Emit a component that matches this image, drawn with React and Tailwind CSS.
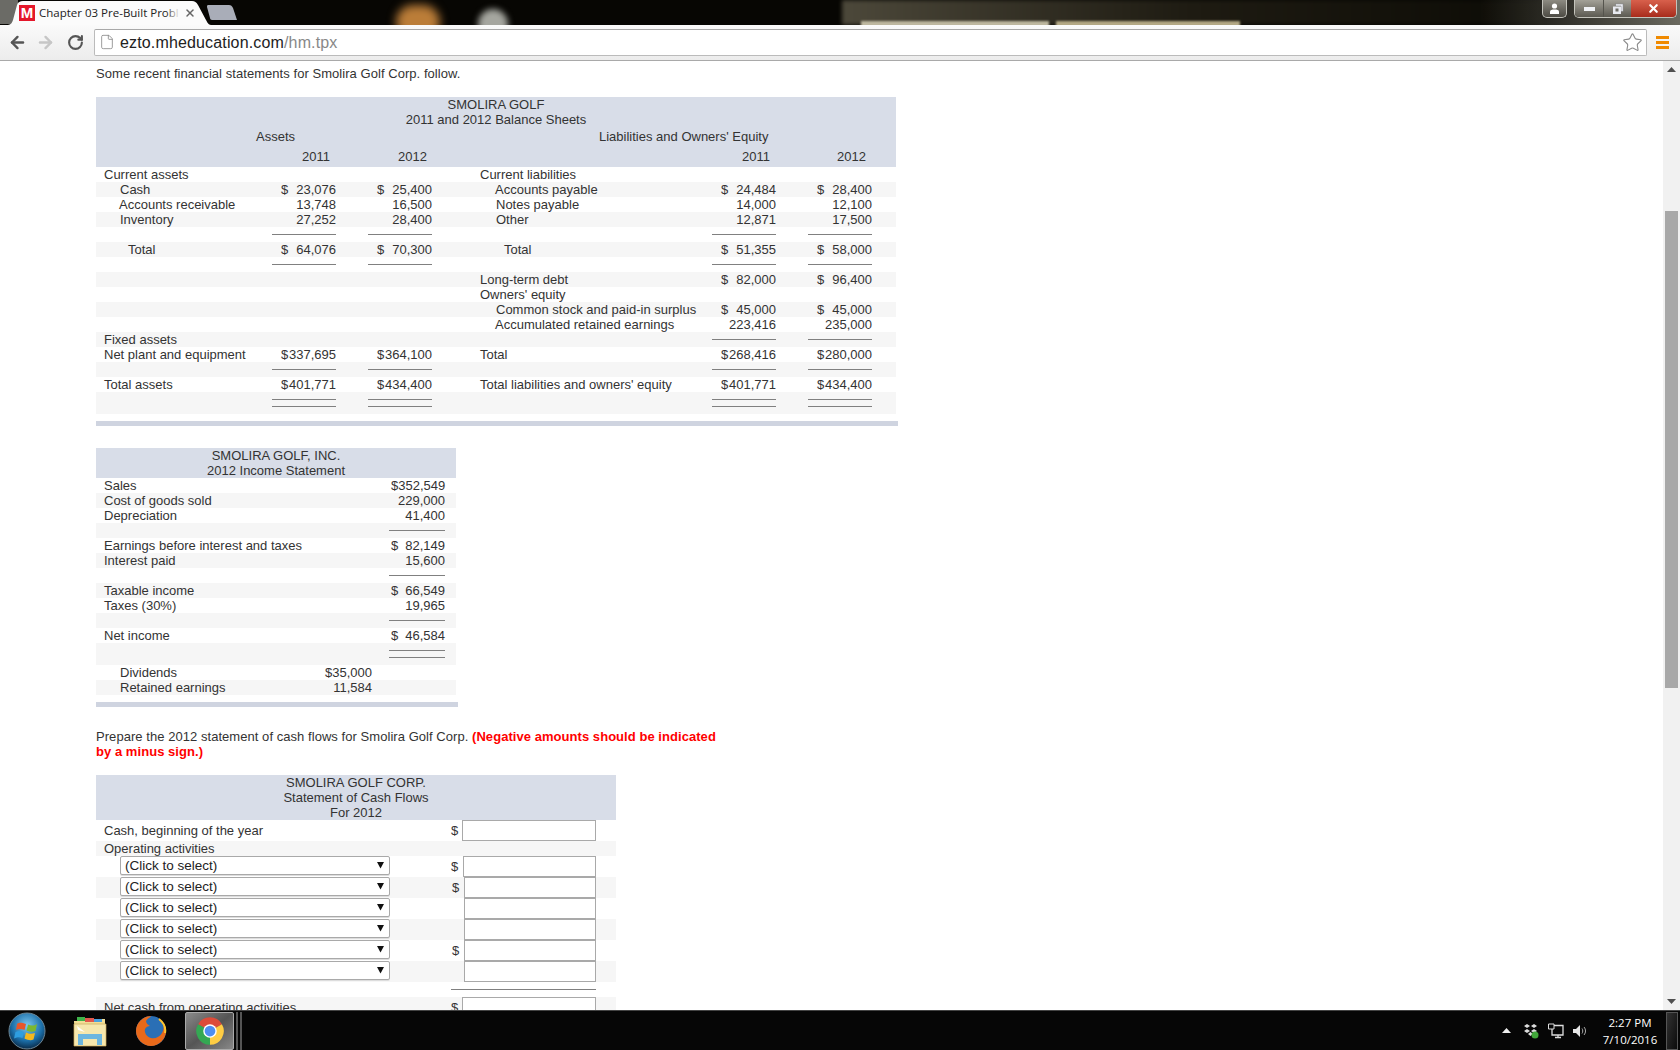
import React from 'react';
import { ArrowLeft, ArrowRight, RotateCw, File, Star, X } from 'lucide-react';

const balanceRows = [
  { left: 'Current assets', right: 'Current liabilities' },
  { gray: true, left: 'Cash', li: 'pl-[24px]', a: '23,076', b: '25,400', right: 'Accounts payable', ri: 'pl-[15px]', c: '24,484', d: '28,400', sign: true },
  { left: 'Accounts receivable', li: 'pl-[23px]', a: '13,748', b: '16,500', right: 'Notes payable', ri: 'pl-[16px]', c: '14,000', d: '12,100' },
  { gray: true, left: 'Inventory', li: 'pl-[24px]', a: '27,252', b: '28,400', right: 'Other', ri: 'pl-[16px]', c: '12,871', d: '17,500' },
  { ruleL: true, ruleR: true },
  { gray: true, left: 'Total', li: 'pl-[32px]', a: '64,076', b: '70,300', right: 'Total', ri: 'pl-[24px]', c: '51,355', d: '58,000', sign: true },
  { ruleL: true, ruleR: true },
  { gray: true, right: 'Long-term debt', c: '82,000', d: '96,400', signR: true },
  { right: "Owners' equity" },
  { gray: true, right: 'Common stock and paid-in surplus', ri: 'pl-[16px]', c: '45,000', d: '45,000', signR: true },
  { right: 'Accumulated retained earnings', ri: 'pl-[15px]', c: '223,416', d: '235,000' },
  { gray: true, left: 'Fixed assets', ruleR: true },
  { left: 'Net plant and equipment', a: '337,695', b: '364,100', right: 'Total', c: '268,416', d: '280,000', sign: true },
  { gray: true, ruleL: true, ruleR: true },
  { left: 'Total assets', a: '401,771', b: '434,400', right: "Total liabilities and owners' equity", c: '401,771', d: '434,400', sign: true },
];

const incomeRows = [
  { label: 'Sales', value: '352,549', sign: true },
  { gray: true, label: 'Cost of goods sold', value: '229,000' },
  { label: 'Depreciation', value: '41,400' },
  { gray: true, rule: true },
  { label: 'Earnings before interest and taxes', value: '82,149', sign: true },
  { gray: true, label: 'Interest paid', value: '15,600' },
  { rule: true },
  { gray: true, label: 'Taxable income', value: '66,549', sign: true },
  { label: 'Taxes (30%)', value: '19,965' },
  { gray: true, rule: true },
  { label: 'Net income', value: '46,584', sign: true },
];

const selectRows = [
  { sign: true, first: true },
  { gray: true, sign: true },
  {},
  { gray: true },
  { sign: true },
  { gray: true },
];

const Rule = () => (
  <div className="flex h-[15px] items-center">
    <div className="h-px w-full bg-[#808080]" />
  </div>
);

const DoubleRule = () => (
  <div className="flex flex-col gap-[6px] pt-[7px]">
    <div className="h-px w-full bg-[#808080]" />
    <div className="h-px w-full bg-[#808080]" />
  </div>
);

const Amount = ({ value, sign }) => (
  <div className="flex justify-between pl-[9px]">
    <span>{sign ? '$' : ''}</span>
    <span>{value}</span>
  </div>
);

const BalanceSheet = () => (
  <div className="w-[802px]">
    <div className="w-[800px] bg-[#d8dde8]">
      <div className="text-center">SMOLIRA GOLF</div>
      <div className="text-center">2011 and 2012 Balance Sheets</div>
      <div className="flex h-[19px] items-center">
        <div className="w-[384px] pl-[160px]">Assets</div>
        <div className="pl-[119px]">Liabilities and Owners' Equity</div>
      </div>
      <div className="grid h-[21px] grid-cols-[176px_64px_32px_64px_48px_232px_64px_32px_64px_24px] items-center">
        <div />
        <div className="pr-[6px] text-right">2011</div>
        <div />
        <div className="pr-[5px] text-right">2012</div>
        <div />
        <div />
        <div className="pr-[6px] text-right">2011</div>
        <div />
        <div className="pr-[6px] text-right">2012</div>
        <div />
      </div>
    </div>
    {balanceRows.map((row, i) => (
      <div
        key={i}
        className={`grid h-[15px] w-[800px] grid-cols-[176px_64px_32px_64px_48px_232px_64px_32px_64px_24px] ${row.gray ? 'bg-[#f6f6f6]' : ''}`}
      >
        <div className={`whitespace-nowrap pl-[8px] ${row.li || ''}`}>{row.left}</div>
        <div>{row.ruleL ? <Rule /> : row.a && <Amount value={row.a} sign={row.sign} />}</div>
        <div />
        <div>{row.ruleL ? <Rule /> : row.b && <Amount value={row.b} sign={row.sign} />}</div>
        <div />
        <div className={`whitespace-nowrap ${row.ri || ''}`}>{row.right}</div>
        <div>{row.ruleR ? <Rule /> : row.c && <Amount value={row.c} sign={row.sign || row.signR} />}</div>
        <div />
        <div>{row.ruleR ? <Rule /> : row.d && <Amount value={row.d} sign={row.sign || row.signR} />}</div>
        <div />
      </div>
    ))}
    <div className="grid h-[22px] w-[800px] grid-cols-[176px_64px_32px_64px_48px_232px_64px_32px_64px_24px] bg-[#f6f6f6]">
      <div />
      <DoubleRule />
      <div />
      <DoubleRule />
      <div />
      <div />
      <DoubleRule />
      <div />
      <DoubleRule />
      <div />
    </div>
    <div className="mt-[7px] h-[5px] bg-[#cfd4e0]" />
  </div>
);

const IncomeStatement = () => (
  <div className="mt-[22px] w-[362px]">
    <div className="w-[360px] bg-[#d8dde8] text-center">
      <div>SMOLIRA GOLF, INC.</div>
      <div>2012 Income Statement</div>
    </div>
    {incomeRows.map((row, i) => (
      <div key={i} className={`flex h-[15px] w-[360px] ${row.gray ? 'bg-[#f6f6f6]' : ''}`}>
        <div className="w-[293px] pl-[8px]">{row.label}</div>
        <div className="w-[56px]">
          {row.rule ? <Rule /> : (
            <div className="flex justify-between pl-[2px]">
              <span>{row.sign ? '$' : ''}</span>
              <span>{row.value}</span>
            </div>
          )}
        </div>
      </div>
    ))}
    <div className="flex h-[22px] w-[360px] bg-[#f6f6f6]">
      <div className="w-[293px]" />
      <div className="w-[56px]"><DoubleRule /></div>
    </div>
    <div className="flex h-[15px] w-[360px]">
      <div className="w-[276px] pl-[24px]">Dividends</div>
      <div className="-ml-[60px] w-[60px] text-right">$35,000</div>
    </div>
    <div className="flex h-[15px] w-[360px] bg-[#f6f6f6]">
      <div className="w-[276px] pl-[24px]">Retained earnings</div>
      <div className="-ml-[60px] w-[60px] text-right">11,584</div>
    </div>
    <div className="mt-[7px] h-[5px] bg-[#cfd4e0]" />
  </div>
);

const CashInput = ({ className }) => (
  <input className={`h-[21px] border border-[#a9a9a9] bg-white ${className}`} />
);

const SelectBox = () => (
  <div className="relative ml-[24px] h-[19px] w-[270px]">
    <select className="h-[19px] w-full appearance-none rounded-[2px] border border-[#a9a9a9] bg-white pl-[4px] text-[13.5px] leading-[17px] text-[#222] shadow-[0_1px_0_#ddd]">
      <option>(Click to select)</option>
    </select>
    <svg className="absolute left-[257px] top-[6px]" width="7" height="7" viewBox="0 0 7 7">
      <path d="M0 0h7L3.5 6.5z" fill="#111" />
    </svg>
  </div>
);

const CashFlows = () => (
  <div className="mt-[16px] w-[520px]">
    <div className="bg-[#d8dde8] text-center">
      <div>SMOLIRA GOLF CORP.</div>
      <div>Statement of Cash Flows</div>
      <div>For 2012</div>
    </div>
    <div className="flex h-[21px] items-center">
      <div className="w-[355px] pl-[8px]">Cash, beginning of the year</div>
      <div className="w-[11px]">$</div>
      <CashInput className="w-[134px]" />
    </div>
    <div className="h-[15px] bg-[#f6f6f6] pl-[8px]">Operating activities</div>
    {selectRows.map((row, i) => (
      <div key={i} className={`flex h-[21px] ${row.gray ? 'bg-[#f6f6f6]' : ''}`}>
        <div className="w-[355px]"><SelectBox /></div>
        <div className={`leading-[21px] ${row.first ? 'w-[12px]' : 'w-[13px] pl-[1px]'}`}>{row.sign ? '$' : ''}</div>
        <CashInput className={row.first ? 'w-[133px]' : 'w-[132px]'} />
      </div>
    ))}
    <div className="flex h-[15px]">
      <div className="w-[355px]" />
      <div className="w-[145px]"><Rule /></div>
    </div>
    <div className="flex h-[21px] items-center bg-[#f6f6f6]">
      <div className="w-[355px] pl-[8px]">Net cash from operating activities</div>
      <div className="w-[11px]">$</div>
      <CashInput className="w-[134px]" />
    </div>
  </div>
);

const TabStrip = () => (
  <div className="relative flex h-[25px] shrink-0 overflow-hidden bg-[#070603]">
    {/* blurred wallpaper behind the title bar */}
    <div className="absolute left-[396px] top-[5px] h-[34px] w-[44px] rounded-full bg-[#bb7d38] blur-[5px]" />
    <div className="absolute left-[478px] top-[9px] h-[30px] w-[30px] rounded-full bg-[#a5a69f] blur-[3px]" />
    <div className="absolute left-[842px] top-0 h-[25px] w-[700px] bg-gradient-to-r from-[#4c483a] via-[#1e1b12] to-[#0c0b06] blur-[2px]" />
    <div className="absolute left-[861px] top-[21px] h-[8px] w-[188px] bg-[#bdb79f] blur-[1px]" />
    <div className="absolute left-[1056px] top-[21px] h-[8px] w-[184px] bg-[#b3a884] blur-[1px]" />
    <div className="absolute left-[1480px] top-0 h-[25px] w-[200px] bg-gradient-to-r from-transparent to-[#6b6a60]" />
    <div className="absolute bottom-[1px] left-0 top-0 w-[18px] rounded-br-[6px] bg-[#6b6b66]" />
    <div className="relative ml-[6px] h-[25px] w-[206px] shrink-0">
      <svg className="absolute inset-0" width="206" height="25" viewBox="0 0 206 25">
        <path d="M0 25C5 25 6 23 7 20L11 5C12 2 14 1 17 1H186C189 1 190 2 192 5L200 20C202 24 203 25 206 25Z" fill="#fbfbfb" />
      </svg>
      <div className="absolute left-[13px] top-[5px] flex h-[16px] w-[16px] items-center justify-center bg-[#e4172b] font-['Liberation_Sans',sans-serif] text-[15px] font-bold leading-[16px] text-white">M</div>
      <div className="absolute left-[33px] top-[4px] whitespace-nowrap font-['Open_Sans',sans-serif] text-[11.5px] leading-[17px] text-[#222]">Chapter 03 Pre-Built Probl</div>
      <div className="absolute left-[160px] top-[4px] h-[17px] w-[14px] bg-gradient-to-r from-transparent to-[#fbfbfb]" />
      <X className="absolute left-[178px] top-[7px] text-[#666]" size={12} strokeWidth={3} />
    </div>
    <svg className="relative ml-[-6px] mt-[5px]" width="32" height="15" viewBox="0 0 32 15">
      <path d="M2 0H23C25 0 26 1 27 3L31 15H6C5 15 4 14 4 13L1 2C1 1 1 0 2 0Z" fill="#a9adb8" />
    </svg>
    <div className="flex-1" />
    <div className="relative mr-[3px] flex h-[19px] items-start">
      <div className="mr-[7px] flex h-[18px] w-[25px] items-center justify-center rounded-b-[5px] border border-t-0 border-[#c4c4bc] bg-gradient-to-b from-[#8d8b82] to-[#4d4b44]">
        <svg width="11" height="11" viewBox="0 0 11 11"><circle cx="5.5" cy="3" r="2.6" fill="#fff" /><path d="M1 11V8.5C1 7 3 6.5 5.5 6.5S10 7 10 8.5V11Z" fill="#fff" /></svg>
      </div>
      <div className="flex h-[18px] w-[103px] overflow-hidden rounded-b-[5px] border border-t-0 border-[#c4c4bc]">
        <div className="flex w-[29px] items-center justify-center border-r border-[#55544d] bg-gradient-to-b from-[#a3a198] to-[#5c5a52]">
          <div className="h-[4px] w-[11px] bg-[#f0f2f6]" />
        </div>
        <div className="flex w-[27px] items-center justify-center bg-gradient-to-b from-[#a3a198] to-[#5c5a52]">
          <svg width="12" height="12" viewBox="0 0 12 12"><path d="M3.5 .8H11.2V8.5H9V3H3.5Z" fill="#e8eaf0" stroke="#555" strokeWidth=".4" /><path d="M1 3.5H9V11H1Z" fill="#e8eaf0" /><path d="M3.5 5.5H6.5V8.5H3.5Z" fill="#6f6e67" /></svg>
        </div>
        <div className="flex flex-1 items-center justify-center bg-gradient-to-b from-[#d8604c] to-[#a82b1b]">
          <X className="text-white" size={13} strokeWidth={4} />
        </div>
      </div>
    </div>
  </div>
);

const Toolbar = () => (
  <div className="flex h-[36px] shrink-0 items-center border-b border-[#a9a9a9] bg-gradient-to-b from-[#fafafa] to-[#ececec] pb-[1px]">
    <ArrowLeft className="ml-[8px] text-[#555]" size={19} strokeWidth={3} />
    <ArrowRight className="ml-[9px] text-[#c6c6c6]" size={19} strokeWidth={3} />
    <RotateCw className="ml-[12px] text-[#555]" size={17} strokeWidth={3} />
    <div className="ml-[10px] flex h-[27px] w-[1553px] items-center rounded-[2px] border border-[#bbbbbb] border-t-[#a8a8a8] bg-white">
      <File className="ml-[4px] text-[#888]" size={16} strokeWidth={1.25} />
      <div className="ml-[5px] pt-[1px] font-['Liberation_Sans',sans-serif] text-[16px] leading-[20px] tracking-[0.15px] text-[#222]">
        ezto.mheducation.com<span className="text-[#888]">/hm.tpx</span>
      </div>
      <div className="flex-1" />
      <Star className="mr-[3px] text-[#8a8a8a]" size={21} strokeWidth={1.25} />
    </div>
    <div className="ml-[9px] flex w-[13px] flex-col gap-[2px]">
      <div className="h-[3px] bg-[#f08a00]" />
      <div className="h-[3px] bg-[#f08a00]" />
      <div className="h-[3px] bg-[#f08a00]" />
    </div>
  </div>
);

const Scrollbar = () => (
  <div className="flex w-[17px] shrink-0 flex-col items-center bg-[#f1f1f1]">
    <svg className="mt-[6px]" width="9" height="5" viewBox="0 0 9 5"><path d="M4.5 0L9 5H0z" fill="#505050" /></svg>
    <div className="mt-[139px] h-[477px] w-[13px] bg-[#a8a8a8]" />
    <div className="flex-1" />
    <svg className="mb-[6px]" width="9" height="5" viewBox="0 0 9 5"><path d="M0 0H9L4.5 5z" fill="#505050" /></svg>
  </div>
);

const Taskbar = () => (
  <div className="flex h-[40px] shrink-0 items-center border-t border-[#444] bg-[#060606]">
    <svg className="ml-[8px]" width="38" height="38" viewBox="0 0 38 38">
      <defs>
        <radialGradient id="orb" cx="50%" cy="35%" r="65%">
          <stop offset="0%" stopColor="#7cc8f0" />
          <stop offset="65%" stopColor="#1b6ea8" />
          <stop offset="100%" stopColor="#0a2c4a" />
        </radialGradient>
      </defs>
      <circle cx="19" cy="19" r="18" fill="url(#orb)" stroke="#6d8796" strokeWidth="1" />
      <path d="M9 12C12 10 14 11 18 12L16.5 18C13 17 11 16.5 8 18Z" fill="#e8562a" />
      <path d="M20 12.5C23 14 26 14 29 12L27.5 19C25 20 22 20 18.5 18.5Z" fill="#7cb82f" />
      <path d="M7.5 20C11 18.5 13 19 16 20L14.5 26C12 25 9.5 25 6 26.5Z" fill="#2e9ee0" />
      <path d="M18 20.5C21 22 24 22 27 21L25.5 27.5C22.5 29 20 28 16.5 26.5Z" fill="#f4b81e" />
    </svg>
    <svg className="ml-[27px]" width="34" height="34" viewBox="0 0 34 34">
      <path d="M1 7H14L16 5H32V30H2Z" fill="#f2dd94" />
      <path d="M4 3H12V7H4Z" fill="#3fb34a" />
      <path d="M12 4H21V8H12Z" fill="#e2574c" />
      <path d="M21 5H29V8H21Z" fill="#4aa1e0" />
      <path d="M1 10H33V32H1Z" fill="#f6e7ad" stroke="#c9a95c" strokeWidth=".7" />
      <path d="M5 20H29V31H24V25H10V31H5Z" fill="#6cb6e0" />
      <path d="M4 12L12 18L5 16Z" fill="#fff" />
    </svg>
    <svg className="ml-[28px]" width="32" height="32" viewBox="0 0 32 32">
      <circle cx="16" cy="16" r="15" fill="#2a6fb5" />
      <path d="M16 1C8 1 1 8 1 16s7 15 15 15 15-7 15-15c0-3-1-6-3-8 1 3 1 7-1 10-2 4-7 6-11 5-4-1-7-5-6-9 1-2 3-3 5-3-2-1-4-3-4-5 2-3 5-4 5-5z" fill="#e8691a" />
      <path d="M24 4c5 4 7 9 6 14" fill="none" stroke="#ffc52e" strokeWidth="2" />
    </svg>
    <div className="ml-[18px] flex h-[38px] w-[49px] items-center justify-center rounded-[2px] border border-[#aaa] bg-gradient-to-br from-[#8a8a8a] via-[#555] to-[#888]">
      <svg width="30" height="30" viewBox="0 0 24 24">
        <path d="M12 12L2.47 6.5A11 11 0 0 1 21.53 6.5Z" fill="#dd4b39" />
        <path d="M12 12L21.53 6.5A11 11 0 0 1 12 23Z" fill="#ffcd44" />
        <path d="M12 12L12 23A11 11 0 0 1 2.47 6.5Z" fill="#34a853" />
        <circle cx="12" cy="12" r="5.4" fill="#fff" />
        <circle cx="12" cy="12" r="4.3" fill="#4f8ef0" />
      </svg>
    </div>
    <div className="ml-[2px] h-[38px] w-[6px] border-x-2 border-[#555]" />
    <div className="flex-1" />
    <svg width="9" height="5" viewBox="0 0 9 5"><path d="M4.5 0L9 5H0z" fill="#eee" /></svg>
    <svg className="ml-[12px]" width="16" height="16" viewBox="0 0 16 16">
      <path d="M4 1L7 3 4 5 1 3ZM11 1L14 3 11 5 8 3ZM4 6L7 8 4 10 1 8ZM11 6L14 8 11 10 8 8ZM7.5 9L10 11 7.5 13 5 11Z" fill="#ddd" />
      <circle cx="12" cy="12" r="3.5" fill="#41a63a" />
    </svg>
    <svg className="ml-[9px]" width="16" height="16" viewBox="0 0 16 16">
      <path d="M4 2.5H15V12H4ZM7 14.5H13M10 12V14.5" fill="none" stroke="#ddd" strokeWidth="1.3" />
      <path d="M.5 1H6V6H.5Z" fill="#060606" stroke="#ddd" />
    </svg>
    <svg className="ml-[8px]" width="16" height="16" viewBox="0 0 16 16">
      <path d="M1 6H4L8 2V14L4 10H1Z" fill="#e6e6e6" />
      <path d="M10 5.5C11 7 11 9 10 10.5M12 4C14 6.5 14 9.5 12 12" fill="none" stroke="#aaa" />
    </svg>
    <div className="ml-[6px] w-[72px] text-center font-['Open_Sans',sans-serif] text-[11.5px] leading-[17px] text-white">
      <div>2:27 PM</div>
      <div>7/10/2016</div>
    </div>
    <div className="mr-[2px] h-[38px] w-[12px] border border-[#555] bg-gradient-to-br from-[#333] to-[#0c0c0c]" />
  </div>
);

export default function App() {
  return (
    <div className="flex h-[1050px] w-[1680px] flex-col overflow-hidden bg-white font-['Liberation_Sans',Arial,sans-serif] text-[13px] leading-[15px] text-[#333]">
      <TabStrip />
      <Toolbar />
      <div className="flex min-h-0 flex-1">
        <div className="min-w-0 flex-1 overflow-hidden pl-[96px] pt-[5px]">
          <p className="mb-[16px] tracking-[0.05px]">Some recent financial statements for Smolira Golf Corp. follow.</p>
          <BalanceSheet />
          <IncomeStatement />
          <p className="mt-[22px] tracking-[0.05px]">
            Prepare the 2012 statement of cash flows for Smolira Golf Corp. <b className="text-[#ff0000]">(Negative amounts should be indicated</b>
            <br />
            <b className="text-[#ff0000]">by a minus sign.)</b>
          </p>
          <CashFlows />
        </div>
        <Scrollbar />
      </div>
      <Taskbar />
    </div>
  );
}
